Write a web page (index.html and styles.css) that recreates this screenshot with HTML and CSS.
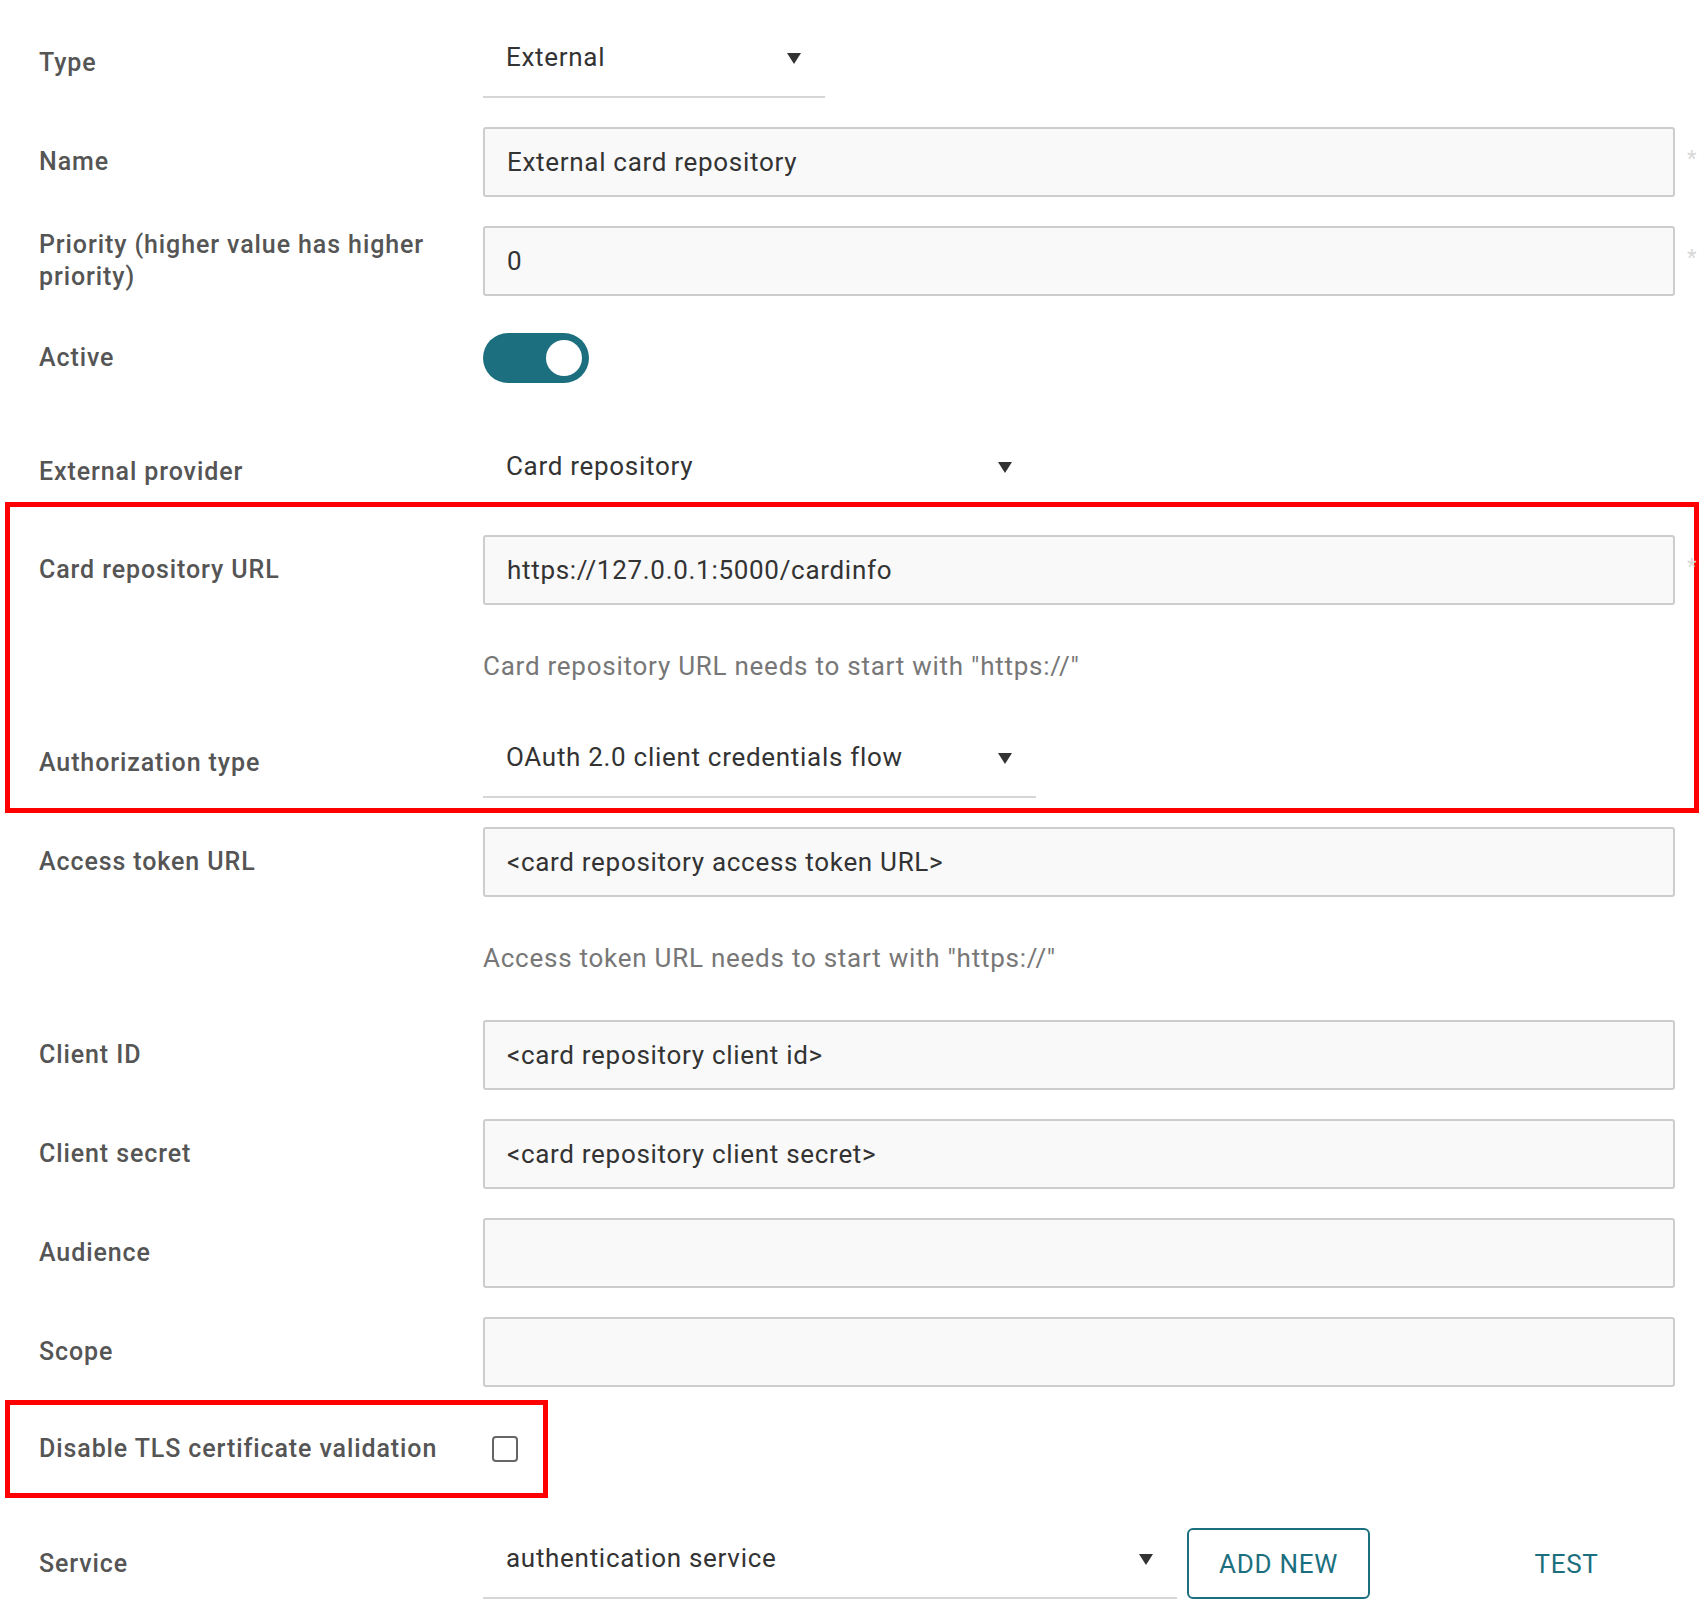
FILE: index.html
```html
<!DOCTYPE html>
<html lang="en">
  <head>
    <meta charset="UTF-8" />
    <meta name="viewport" content="width=device-width, initial-scale=1.0" />
    <title>External card repository</title>
    <link rel="stylesheet" href="styles.css">
  </head>
  <body>
    <form class="form">
      <div class="row">
        <label class="label">Type</label>
        <div class="select select-type">
          <span>External</span><i class="caret"></i>
        </div>
      </div>

      <div class="row">
        <label class="label" for="name">Name</label>
        <input class="input" id="name" type="text" value="External card repository" />
        <span class="req">*</span>
      </div>

      <div class="row">
        <label class="label" for="priority">Priority (higher value has higher priority)</label>
        <input class="input" id="priority" type="text" value="0" />
        <span class="req">*</span>
      </div>

      <div class="row row-toggle">
        <label class="label">Active</label>
        <div class="toggle"><span class="knob"></span></div>
      </div>

      <div class="row row-provider">
        <label class="label">External provider</label>
        <div class="select select-wide">
          <span>Card repository</span><i class="caret"></i>
        </div>
      </div>

      <div class="highlight">
        <div class="row">
          <label class="label" for="repoUrl">Card repository URL</label>
          <input class="input" id="repoUrl" type="text" value="https://127.0.0.1:5000/cardinfo" />
          <span class="req">*</span>
        </div>
        <p class="hint">Card repository URL needs to start with "https://"</p>
        <div class="row row-last">
          <label class="label">Authorization type</label>
          <div class="select select-wide">
            <span>OAuth 2.0 client credentials flow</span><i class="caret"></i>
          </div>
        </div>
      </div>

      <div class="row">
        <label class="label" for="tokenUrl">Access token URL</label>
        <input class="input" id="tokenUrl" type="text" value="<card repository access token URL>" />
      </div>
      <p class="hint">Access token URL needs to start with "https://"</p>

      <div class="row">
        <label class="label" for="clientId">Client ID</label>
        <input class="input" id="clientId" type="text" value="<card repository client id>" />
      </div>

      <div class="row">
        <label class="label" for="clientSecret">Client secret</label>
        <input class="input" id="clientSecret" type="text" value="<card repository client secret>" />
      </div>

      <div class="row">
        <label class="label" for="audience">Audience</label>
        <input class="input" id="audience" type="text" value="" />
      </div>

      <div class="row row-scope">
        <label class="label" for="scope">Scope</label>
        <input class="input" id="scope" type="text" value="" />
      </div>

      <div class="highlight-small">
        <label class="label label-tls" for="tls">Disable TLS certificate validation</label>
        <span class="checkbox" id="tls"></span>
      </div>

      <div class="row row-service">
        <label class="label">Service</label>
        <div class="service">
          <div class="select select-service">
            <span>authentication service</span><i class="caret"></i>
          </div>
          <button type="button" class="btn btn-outline">ADD NEW</button>
          <button type="button" class="btn btn-text">TEST</button>
        </div>
      </div>
    </form>
  </body>
</html>
```

FILE: styles.css
```css
html,
body {
  margin: 0;
  padding: 0;
  background: #ffffff;
  overflow: hidden;
}
body {
  font-family: Roboto, "Liberation Sans", Arial, sans-serif;
  color: #333;
}
.form {
  padding: 28px 0 0 39px;
}
.row {
  display: grid;
  grid-template-columns: 444px 1192px 1fr;
  align-items: center;
  margin-bottom: 29px;
}
.label {
  font-size: 25px;
  font-weight: 500;
  line-height: 32px;
  letter-spacing: 0.9px;
  color: #555;
  padding-right: 36px;
}
.input {
  box-sizing: border-box;
  height: 70px;
  width: 100%;
  margin: 0;
  padding: 0 22px;
  font-family: inherit;
  font-size: 26px;
  letter-spacing: 0.7px;
  color: #333;
  background: #f9f9f9;
  border: 2px solid #cdcdcd;
  border-radius: 3px;
  outline: none;
}
.req {
  color: #d8d8d8;
  font-size: 22px;
  padding-left: 12px;
  align-self: start;
  margin-top: 19px;
}
.select {
  box-sizing: border-box;
  height: 70px;
  display: flex;
  align-items: flex-start;
  justify-content: space-between;
  padding: 13px 24px 0 23px;
  font-size: 26px;
  letter-spacing: 0.7px;
  line-height: 32px;
  color: #333;
  border-bottom: 2px solid #d6d6d6;
}
.select-type {
  width: 342px;
}
.select-wide {
  width: 553px;
}
.select-service {
  width: 694px;
}
.caret {
  width: 0;
  height: 0;
  margin-top: 12px;
  border-left: 7px solid transparent;
  border-right: 7px solid transparent;
  border-top: 11px solid #333;
}
.row-toggle {
  min-height: 66px;
  margin-bottom: 46px;
}
.toggle {
  box-sizing: border-box;
  width: 106px;
  height: 50px;
  padding: 7px;
  border-radius: 25px;
  background: #1c6f7e;
  display: flex;
  justify-content: flex-end;
}
.knob {
  width: 36px;
  height: 36px;
  border-radius: 50%;
  background: #fff;
}
.row-provider {
  margin-bottom: 0;
}
/* underline sits under the red frame */
.row-provider .select {
  border-bottom-color: transparent;
}
/* red annotation frames */
.highlight {
  margin: -5px 8px 14px -34px;
  padding: 28px 0 10px 29px;
  border: 5px solid #ff0000;
}
.row-last {
  margin-bottom: 0;
}
.hint {
  margin: 0 0 29px 444px;
  height: 65px;
  line-height: 65px;
  font-size: 26px;
  letter-spacing: 0.75px;
  color: #777;
}
.row-scope {
  margin-bottom: 13px;
}
.highlight-small {
  box-sizing: border-box;
  width: 543px;
  height: 98px;
  margin: 0 0 30px -34px;
  padding: 0 0 0 29px;
  border: 5px solid #ff0000;
  display: flex;
  align-items: center;
}
.label-tls {
  width: 444px;
  box-sizing: border-box;
  padding-right: 0;
  flex: none;
}
.checkbox {
  box-sizing: border-box;
  width: 26px;
  height: 26px;
  margin-left: 9px;
  border: 2px solid #666;
  border-radius: 4px;
  background: #fff;
}
.row-service {
  margin-bottom: 0;
}
.service {
  display: flex;
  align-items: center;
}
.btn {
  box-sizing: border-box;
  height: 71px;
  width: 183px;
  padding: 0;
  font-family: inherit;
  font-size: 26px;
  letter-spacing: 0.7px;
  color: #1c6f7e;
  background: #fff;
  cursor: pointer;
}
.btn-outline {
  margin-left: 10px;
  border: 2px solid #1c6f7e;
  border-radius: 6px;
}
.btn-text {
  margin-left: 105px;
  border: none;
}
```
